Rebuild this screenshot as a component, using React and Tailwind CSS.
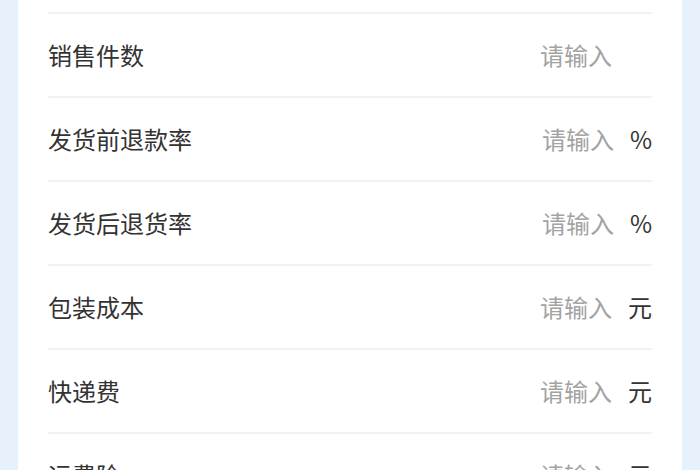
import React from 'react';

const rows = [
  { label: '', unit: '' },
  { label: '销售件数', unit: '' },
  { label: '发货前退款率', unit: '%' },
  { label: '发货后退货率', unit: '%' },
  { label: '包装成本', unit: '元' },
  { label: '快递费', unit: '元' },
  { label: '运费险', unit: '元' },
];

const App = () => {
  return (
    <div className="w-[700px] h-[470px] overflow-hidden bg-[#e6f1fc] px-[18px] font-['Noto_Sans_CJK_SC',sans-serif]">
      <div className="bg-white px-[30px] -mt-[70px] h-[600px]">
        {rows.map((row, i) => (
          <div key={i} className="flex items-center justify-between h-[84px] border-b-2 border-[#f2f2f2]">
            <span className="text-[24px] leading-none text-[#333333]">{row.label}</span>
            {row.label && (
              <div className="flex items-center text-[24px] leading-none">
                <span className="text-[#a3a3a3]">请输入</span>
                <span className={`ml-4 text-[#333333] ${row.unit ? '' : 'invisible'}`}>{row.unit || '元'}</span>
              </div>
            )}
          </div>
        ))}
      </div>
    </div>
  );
};

export default App;
